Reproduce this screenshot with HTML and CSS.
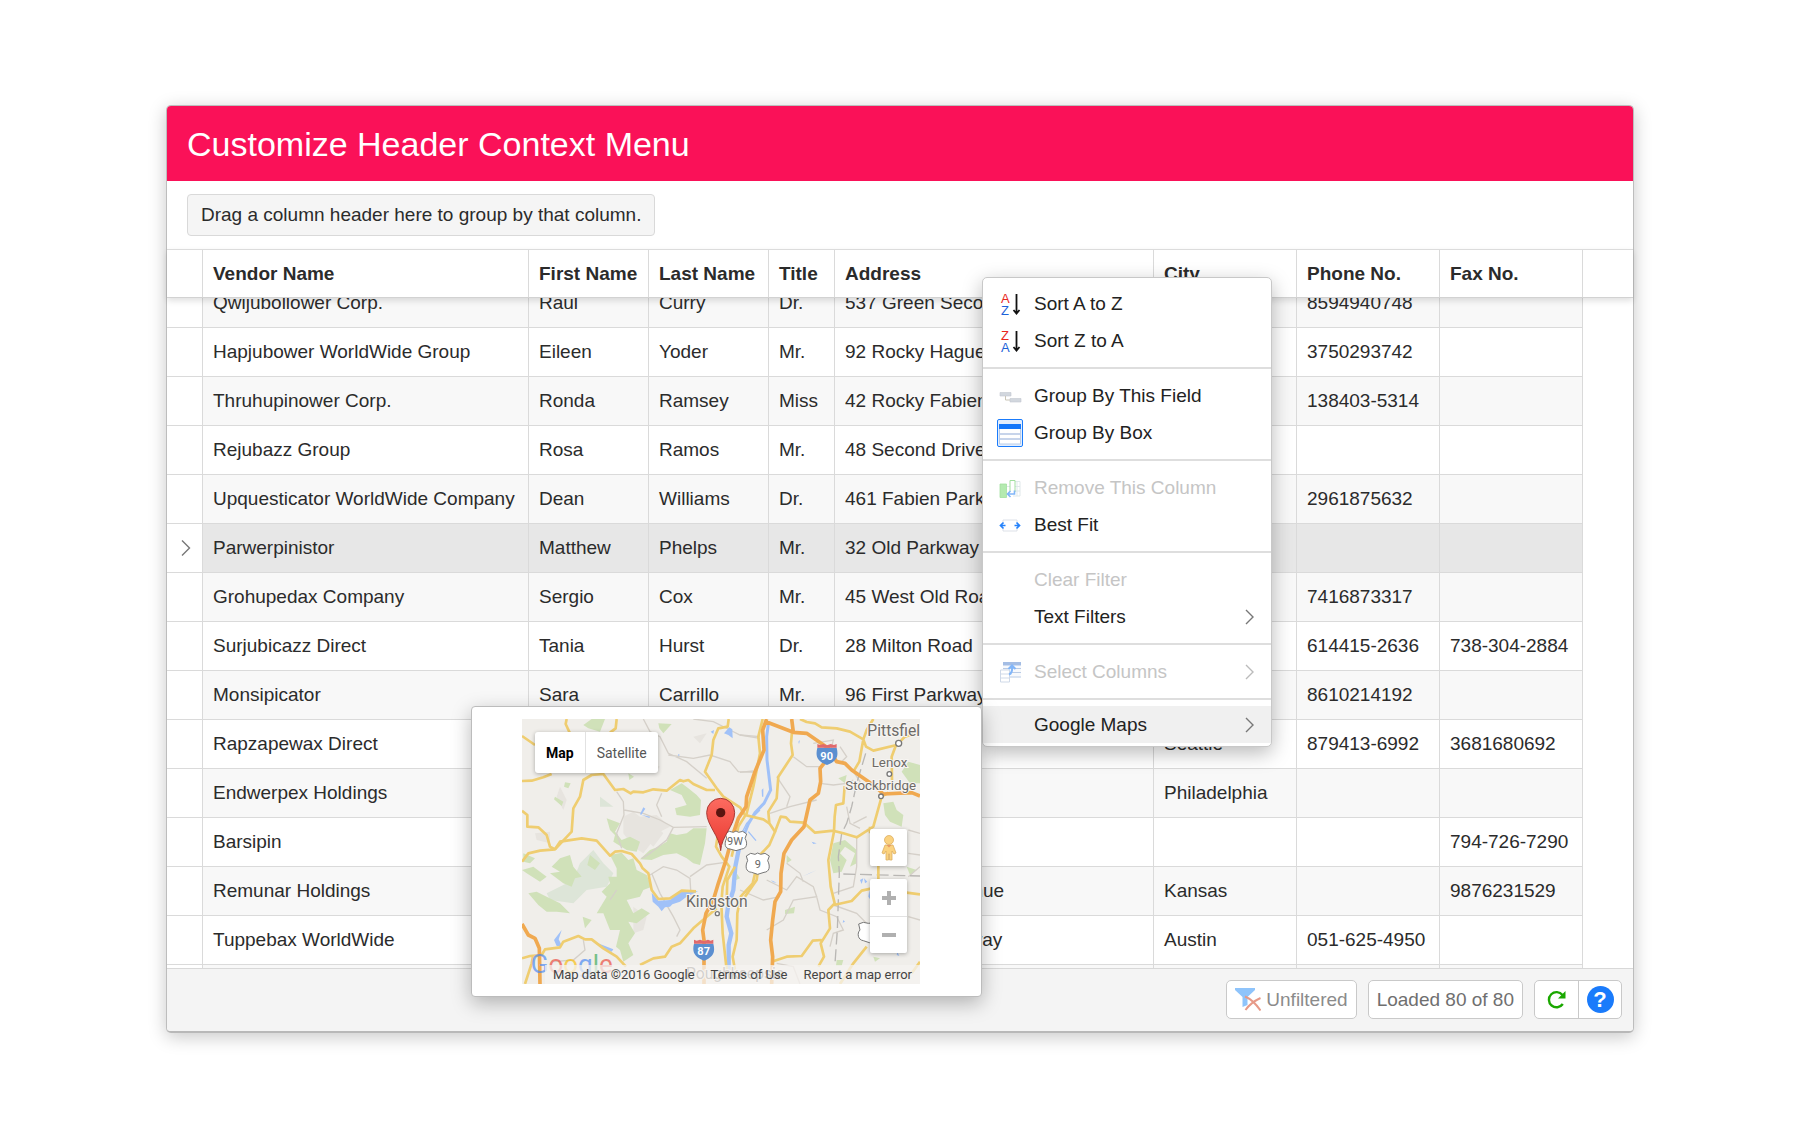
FILE: index.html
```html
<!DOCTYPE html>
<html lang="en">
<head>
<meta charset="utf-8">
<title>Customize Header Context Menu</title>
<link rel="stylesheet" href="styles.css">
</head>
<body>
<main class="window">
  <header class="titlebar"><h1>Customize Header Context Menu</h1></header>
  <div class="group-bar"><div class="group-hint">Drag a column header here to group by that column.</div></div>

  <section class="grid">
    <table class="grid-table grid-head">
      <colgroup><col class="c-mark"><col class="c-vendor"><col class="c-first"><col class="c-last"><col class="c-title"><col class="c-address"><col class="c-wide"><col class="c-wide"><col class="c-wide"><col></colgroup>
      <thead>
        <tr><th></th><th scope="col">Vendor Name</th><th scope="col">First Name</th><th scope="col">Last Name</th><th scope="col">Title</th><th scope="col">Address</th><th scope="col">City</th><th scope="col">Phone No.</th><th scope="col">Fax No.</th><th></th></tr>
      </thead>
    </table>
    <div class="grid-body">
      <table class="grid-table grid-rows" aria-label="Vendors">
        <colgroup><col class="c-mark"><col class="c-vendor"><col class="c-first"><col class="c-last"><col class="c-title"><col class="c-address"><col class="c-wide"><col class="c-wide"><col class="c-wide"><col></colgroup>
        <tbody>
          <tr><td></td><td>Qwijubollower Corp.</td><td>Raul</td><td>Curry</td><td>Dr.</td><td>537 Green Second St.</td><td></td><td>8594940748</td><td></td><td></td></tr>
          <tr><td></td><td>Hapjubower WorldWide Group</td><td>Eileen</td><td>Yoder</td><td>Mr.</td><td>92 Rocky Hague Road</td><td></td><td>3750293742</td><td></td><td></td></tr>
          <tr><td></td><td>Thruhupinower Corp.</td><td>Ronda</td><td>Ramsey</td><td>Miss</td><td>42 Rocky Fabien Road</td><td></td><td>138403-5314</td><td></td><td></td></tr>
          <tr><td></td><td>Rejubazz Group</td><td>Rosa</td><td>Ramos</td><td>Mr.</td><td>48 Second Drive</td><td></td><td></td><td></td><td></td></tr>
          <tr><td></td><td>Upquesticator WorldWide Company</td><td>Dean</td><td>Williams</td><td>Dr.</td><td>461 Fabien Parkway</td><td></td><td>2961875632</td><td></td><td></td></tr>
          <tr class="selected"><td><svg class="chevron" viewBox="0 0 10 16" aria-hidden="true"><path d="M1 0.5 8.5 8 1 15.5"/></svg></td><td>Parwerpinistor</td><td>Matthew</td><td>Phelps</td><td>Mr.</td><td>32 Old Parkway</td><td></td><td></td><td></td><td></td></tr>
          <tr><td></td><td>Grohupedax Company</td><td>Sergio</td><td>Cox</td><td>Mr.</td><td>45 West Old Road</td><td></td><td>7416873317</td><td></td><td></td></tr>
          <tr><td></td><td>Surjubicazz Direct</td><td>Tania</td><td>Hurst</td><td>Dr.</td><td>28 Milton Road</td><td></td><td>614415-2636</td><td>738-304-2884</td><td></td></tr>
          <tr><td></td><td>Monsipicator</td><td>Sara</td><td>Carrillo</td><td>Mr.</td><td>96 First Parkway</td><td></td><td>8610214192</td><td></td><td></td></tr>
          <tr><td></td><td>Rapzapewax Direct</td><td></td><td></td><td></td><td></td><td>Seattle</td><td>879413-6992</td><td>3681680692</td><td></td></tr>
          <tr><td></td><td>Endwerpex Holdings</td><td></td><td></td><td></td><td></td><td>Philadelphia</td><td></td><td></td><td></td></tr>
          <tr><td></td><td>Barsipin</td><td></td><td></td><td></td><td></td><td></td><td></td><td>794-726-7290</td><td></td></tr>
          <tr><td></td><td>Remunar Holdings</td><td></td><td></td><td></td><td>98 Second Avenue</td><td>Kansas</td><td></td><td>9876231529</td><td></td></tr>
          <tr><td></td><td>Tuppebax WorldWide</td><td></td><td></td><td></td><td>71 Rocky Freeway</td><td>Austin</td><td>051-625-4950</td><td></td><td></td></tr>
          <tr><td></td><td></td><td></td><td></td><td></td><td></td><td></td><td></td><td></td><td></td></tr>
        </tbody>
      </table>
    </div>
  </section>

  <footer class="statusbar">
    <button type="button" class="status-btn muted">
      <svg class="i-filter" viewBox="0 0 26 24" aria-hidden="true"><path d="M0 0H20V2L12.5 9V17L7.500 19V9L0 2Z" fill="#8fc4fb"/><path d="M10 8.500C16 11 21 16 25.500 22.500M25.500 10C19 13 14 17 10.500 22" fill="none" stroke="#e79a88" stroke-width="2"/></svg>
      <span>Unfiltered</span>
    </button>
    <button type="button" class="status-btn">Loaded 80 of 80</button>
    <div class="btn-pair">
      <button type="button" aria-label="Refresh"><svg class="i-refresh" viewBox="0 0 20 20" aria-hidden="true"><path d="M15.800 14A7.600 7.600 0 1 1 15.500 5" fill="none" stroke="#1ba800" stroke-width="2.400"/><path d="M18.500 1V8.500H11Z" fill="#1ba800"/></svg></button>
      <button type="button" aria-label="Help"><span class="help">?</span></button>
    </div>
  </footer>

  <nav class="menu" aria-label="Column menu">
    <div class="menu-section">
      <button type="button"><svg class="icon" viewBox="0 0 24 24" aria-hidden="true"><text x="3" y="11" class="az red">A</text><text x="3" y="23" class="az blue">Z</text><path d="M18.500 2V21M15.500 18 18.500 21.500 21.500 18" fill="none" stroke="#111" stroke-width="1.800"/></svg><span>Sort A to Z</span></button>
      <button type="button"><svg class="icon" viewBox="0 0 24 24" aria-hidden="true"><text x="3" y="11" class="az red">Z</text><text x="3" y="23" class="az blue">A</text><path d="M18.500 2V21M15.500 18 18.500 21.500 21.500 18" fill="none" stroke="#111" stroke-width="1.800"/></svg><span>Sort Z to A</span></button>
    </div>
    <div class="menu-section">
      <button type="button"><svg class="icon" viewBox="0 0 24 24" aria-hidden="true"><path d="M2 8.500H13V12H2ZM12 14.500H23V18H12Z" fill="#d2d7de" stroke="#c2c8d0" stroke-width=".6"/><path d="M7.500 12V16H12" fill="none" stroke="#c9c5b8"/></svg><span>Group By This Field</span></button>
      <button type="button" class="checked"><svg class="icon" viewBox="0 0 24 26" aria-hidden="true"><path d="M1.500 4.500H22.500V24H1.500Z" fill="#fff" stroke="#b9cce8"/><path d="M1 4H23V9H1Z" fill="#1477fa"/><path d="M2 14H22M2 19H22" stroke="#8fa9d6"/></svg><span>Group By Box</span></button>
    </div>
    <div class="menu-section">
      <button type="button" disabled><svg class="icon" viewBox="0 0 24 24" aria-hidden="true"><path d="M15 5.500H22V20H15M15 10.500H22M15 15H22M19 5V20M9 10.500H12" fill="none" stroke="#dfe8ea"/><path d="M2 8H8.500V21.500H2Z" fill="#b4eab0" stroke="#a2dfa0" stroke-width=".8"/><path d="M12 15V4.500H17V16" fill="#fff" stroke="#a2dfa0"/><path d="M16.500 14.500V18H9.500M12.500 15 9.500 18 12.500 21" fill="none" stroke="#80b5f8" stroke-width="1.600"/></svg><span>Remove This Column</span></button>
      <button type="button"><svg class="icon" viewBox="0 0 24 24" aria-hidden="true"><path d="M5 9.500V7H19V9.500M5 15.500V18H19V15.500" fill="none" stroke="#dde1e8"/><path d="M7.500 12.500H3M5.500 9.500 2.500 12.500 5.500 15.500M16.500 12.500H21M18.500 9.500 21.500 12.500 18.500 15.500" fill="none" stroke="#2582fb" stroke-width="1.700"/></svg><span>Best Fit</span></button>
    </div>
    <div class="menu-section">
      <button type="button" disabled><span class="icon"></span><span>Clear Filter</span></button>
      <button type="button"><span class="icon"></span><span>Text Filters</span><svg class="chevron" viewBox="0 0 10 16" aria-hidden="true"><path d="M1 1 8 8 1 15"/></svg></button>
    </div>
    <div class="menu-section">
      <button type="button" disabled><svg class="icon" viewBox="0 0 24 24" aria-hidden="true"><path d="M5 3H23V17.500H12V11H5Z" fill="#f7f9fc"/><path d="M5 2H23V5.500H5Z" fill="#a4bde4"/><path d="M5 8.500H23M11 12.500H23M12 17H23" stroke="#b9cbe6"/><path d="M2.500 10H11.500V22H2.500ZM2 14H12M2 18H12" fill="#fff" stroke="#cfd9e8"/><path d="M11 14.500C14 13.500 14.500 11 14 6M10.500 9 14 5.500 17.500 9" fill="none" stroke="#82b6f9" stroke-width="2"/></svg><span>Select Columns</span><svg class="chevron" viewBox="0 0 10 16" aria-hidden="true"><path d="M1 1 8 8 1 15"/></svg></button>
    </div>
    <div class="menu-section">
      <button type="button" class="active"><span class="icon"></span><span>Google Maps</span><svg class="chevron" viewBox="0 0 10 16" aria-hidden="true"><path d="M1 1 8 8 1 15"/></svg></button>
    </div>
  </nav>

  <aside class="map-popup">
    <div class="map">
      <svg class="map-canvas" viewBox="66 57 1194 795" role="img" aria-label="Map around Kingston">
        <defs><linearGradient id="pin" x1="0" y1="0" x2="0" y2="1"><stop offset="0" stop-color="#fd6b60"/><stop offset="1" stop-color="#e93a31"/></linearGradient></defs>
        <path d="M66 57H1260V852H66Z" fill="#f0eeea"/>
        <g fill="#e7e4df">
          <path d="M370 350 400 335 420 350 470 345 510 380 480 395 430 460 400 440 370 400ZM180 260 200 300 190 330 170 290ZM105 400 150 395 150 430 110 420ZM620 100 600 130 580 110ZM440 180 480 200 460 220ZM470 380 490 400 460 440 440 420ZM400 620 440 650 430 690 400 700Z"/>
        </g>
        <g fill="#dde5d8">
          <path d="M140 580 220 540 240 490 280 450 310 490 340 520 320 560 260 570 220 610 150 600ZM300 290 340 320 300 320Z"/>
        </g>
        <g fill="#d0e1b9">
          <path d="M250 75 275 57 315 57 300 95 265 85ZM475 70 515 72 490 100 478 85ZM195 247 212 250 205 265 192 260ZM165 290 190 305 185 318 162 298ZM385 220 402 230 388 240Z"/>
          <path d="M510 270 545 250 565 265 590 285 603 300 600 345 570 350 530 345 525 325 560 315 545 285ZM450 450 475 440 500 425 510 400 530 405 560 400 580 385 620 385 615 430 600 495 580 490 560 475 530 460 490 465 455 480 420 478Z"/>
          <path d="M320 355 360 370 345 395 365 420 390 410 420 425 410 455 380 450 340 425 345 405 330 390ZM330 465 365 458 385 480 400 475 410 510 440 525 455 560 430 570 420 590 380 600 400 640 425 625 450 640 410 670 385 665 405 700 385 730 400 765 370 785 360 750 348 740 360 690 330 690 310 640 290 640 320 590 305 575 330 550 325 530 350 530 350 505ZM180 475 210 465 220 500 245 530 225 535 215 560 190 550 150 520 180 515 155 500ZM70 460 105 475 90 490 70 485ZM66 510 100 500 140 530 120 545 80 520ZM85 580 110 575 140 590 180 610 210 640 170 635 140 635 115 615ZM248 650 275 660 255 685ZM270 465 300 490 285 510 262 495Z"/>
          <path d="M1205 215 1225 185 1260 195V250L1230 250ZM1150 310 1180 305 1190 330 1210 345 1205 380 1170 365 1155 345ZM1015 235 1040 225 1035 250ZM1000 430 1035 420 1070 450 1070 490 1050 500 1065 460 1035 440 1020 460 1040 480 1025 515 1000 520 990 480ZM855 630 885 620 882 640 855 642ZM860 465 875 480 860 490ZM1220 500 1250 510 1230 525ZM1010 780 1030 780 1025 797 1008 797ZM1120 770 1140 775 1125 785ZM710 520 720 535 708 540Z"/>
        </g>
        <g fill="none" stroke="#d5d0c9" stroke-width="4">
          <path d="M430 57 450 95 480 110 505 160 560 185 620 235M505 165 580 175 630 165 690 185 715 215 770 217M580 57 640 65 690 90 720 105 780 115M350 275 370 305 372 345 350 400 365 445M372 330 430 340 480 360 520 382 620 380M485 280 470 315 485 350M520 382 500 420 450 460 425 475M450 525 490 500 530 510 570 535 572 570M570 530 620 495 670 488M455 520 480 580 520 650 540 690 530 710M250 720 255 750 220 780 160 785M330 600 350 570"/>
          <path d="M720 105 780 110M720 217 760 213M830 230 870 290 860 320M810 340 870 320 950 300M880 170 920 200 960 200M1020 140 1040 170 1020 190M990 160 1000 120 940 130M960 250 1000 255 1040 250 1060 240M1060 215 1080 245 1075 270M800 540 860 570 890 530 940 560 950 590 880 600 850 660 800 690M860 490 900 520 910 545M950 590 960 630 1010 650 1030 690 1000 700 990 740M1000 615 1070 640 1110 680M1070 412 1070 500 1060 560 1000 580M1040 320 1050 370 1080 385M1100 350 1060 370M1225 460 1260 465M1225 530 1260 500M1225 390 1260 400M1225 650 1260 660M720 570 790 600 840 590M1140 600 1120 630M900 852 880 800 830 790"/>
        </g>
        <g fill="#a0c1f8">
          <path d="M455 578 475 602 510 600 545 572 594 574 560 590 540 605 517 613 510 620 495 622 485 634 475 620 458 605ZM688 82 697 88 698 115 685 105 672 100ZM632 95 642 90 640 102ZM185 690 176 718 186 738 170 738 162 720ZM275 722 340 748 335 755 300 740ZM430 322 436 326 424 344 450 350 448 354 420 343ZM535 162 540 165 534 168Z"/>
          <path d="M935 425 950 430 940 432ZM812 540 830 548 820 547ZM905 530 950 510 930 520ZM1080 540 1090 535 1085 552ZM1092 535 1102 545 1095 550ZM1108 570 1112 600 1105 590ZM1030 660 1035 665 1028 668ZM1192 755 1198 768 1190 765ZM895 125 900 120 897 132ZM785 270 790 265 790 290 786 290Z"/>
        </g>
        <path d="M806 65 800 110 801 180 812 270 792 310 765 338 745 372 718 440" fill="none" stroke="#a0c1f8" stroke-width="9"/>
        <path d="M718 440 706 500 700 570 684 620 680 650 694 700 686 735 686 810" fill="none" stroke="#a0c1f8" stroke-width="13"/>
        <path d="M715 420 740 370 780 330M745 395 768 422" fill="none" stroke="#a0c1f8" stroke-width="4"/>
        <path d="M1097 160 1085 200 1070 250 1055 320 1040 370 1025 400 1015 470 1018 520 1015 600 1012 690 1005 790M1030 522 1260 528" fill="none" stroke="#b9b7b4" stroke-width="4" stroke-dasharray="36 14"/>
        <g fill="none" stroke="#efcd70" stroke-width="8" stroke-linejoin="round">
          <path d="M66 108 105 135M200 57 197 72 210 100M350 57 347 85 330 98M686 57 683 80 655 85 640 120 635 165 615 215 650 265 670 290 720 322 735 345 790 358 808 370"/>
          <path d="M66 243 95 242 130 232 155 222M66 332 82 345 82 380 115 382 140 405 150 440 165 448M66 485 85 460 120 452 165 448 215 395 220 325 240 290 250 240 275 225 310 222 345 270 370 267 392 280 400 275 430 277 460 268 500 272 540 240 550 244 565 240 580 252 620 270 645 270"/>
          <path d="M165 448 180 425 245 415 290 422 330 467 345 455 365 453 395 462 420 490 428 505 445 520 455 570 475 597 510 595 545 572 588 574M66 775 90 768 125 765 135 748 180 742 190 725 235 708 255 718 275 718 310 745 350 770 378 800M75 852 95 790 100 765M420 795 460 775 495 770 515 740 540 730 580 685 650 625"/>
          <path d="M655 395 648 440 665 470 688 500 668 560 664 610 668 700 680 810M705 500 682 540 680 600M770 500 758 550 722 590 712 640 710 720 698 770 705 810M788 57 775 110 780 160 760 260 740 340 715 380 695 470"/>
          <path d="M900 57 920 66 945 70 965 82 1010 85 1050 95 1090 118 1098 140 1120 152 1190 135 1215 110 1260 95M1120 57 1100 90 1090 118 1078 185 1060 215M876 95 873 130 878 165 835 230 830 295 805 335 808 370 825 395 808 435 780 465 770 540 735 590"/>
          <path d="M825 395 842 350 858 352 870 365 912 368 945 398 1000 392 1030 400 1070 412 1120 380 1145 290 1165 278M1034 258 1030 310 1008 315 1004 350 1002 395 985 480 992 560 1004 610 985 630 990 685 962 730 972 770 955 800M1002 615 1055 603 1085 572 1140 560M815 785 860 770 905 768 938 722 965 720M1135 490V560M1100 740 1060 790 1020 852M1190 130 1175 170 1176 240M1220 578 1260 583M1260 785 1235 820M1110 380V400"/>
        </g>
        <g fill="none" stroke="#f0a950" stroke-width="11" stroke-linejoin="round">
          <path d="M800 57 788 90 792 150 765 215 740 290 738 320 715 355 700 400 678 480 655 550 640 600 618 640 608 690 612 720V852M800 66 880 97 920 100 985 145 1010 185 1035 190 1055 210 1120 255 1150 282 1235 278 1260 288M875 57 880 97M980 180 960 205 962 245 955 280 930 300 912 380 875 420 852 460 843 520 842 575 825 605 818 660 812 720 818 770 815 852M66 672 85 705 105 715 118 745 120 852"/>
        </g>
        <g class="shield">
          <path d="M676 400 688 394 700 397 708 393 716 397 728 394 740 402 735 415C744 430 740 446 725 447L708 452 690 447C674 446 672 430 680 415Z"/>
          <path d="M739 468 752 460 765 463 773 459 782 463 795 460 808 468 803 482C812 500 808 516 792 517L773 523 755 517C738 516 734 500 743 482Z"/>
          <path d="M1076 672 1090 667 1105 670 1130 668V728H1108L1090 722C1074 720 1070 700 1080 690Z"/>
        </g>
        <g fill="#5b8fd0">
          <path d="M582 731H640C646 755 642 770 612 782 582 770 576 755 582 731ZM952 143H1010C1016 168 1012 184 981 195 950 184 946 168 952 143Z"/>
        </g>
        <path d="M582 719 590 722 600 719 612 723 624 719 632 722 640 719V731H582ZM952 132 960 135 970 132 981 136 992 132 1002 135 1010 132V143H952Z" fill="#e0696c"/>
        <g class="town-dot"><circle cx="652" cy="641" r="6"/><circle cx="1196" cy="130" r="9"/><circle cx="1168" cy="222" r="7"/><circle cx="1143" cy="289" r="7"/></g>
        <g class="town">
          <text x="558" y="621" class="city">Kingston</text>
          <text x="1102" y="108" class="city">Pittsfield</text>
          <text x="1115" y="202">Lenox</text>
          <text x="1036" y="270">Stockbridge</text>
          <text x="558" y="838" class="city">Poughkeepsie</text>
        </g>
        <g class="route"><text x="681" y="435">9W</text><text x="764" y="503">9</text></g>
        <g class="interstate"><text x="592" y="766">87</text><text x="961" y="179">90</text></g>
        <path d="M662 452C660 410 620 375 620 338A42 43 0 0 1 704 338C704 375 664 410 662 452Z" fill="url(#pin)" stroke="#a83a34" stroke-width="3"/>
        <circle cx="662" cy="338" r="14" fill="#5a1510"/>
        <text x="92" y="818" class="logo"><tspan fill="#4285f4">G</tspan><tspan fill="#ea4335">o</tspan><tspan fill="#fbbc05">o</tspan><tspan fill="#4285f4">g</tspan><tspan fill="#34a853">l</tspan><tspan fill="#ea4335">e</tspan></text>
      </svg>
      <div class="map-type"><button type="button" class="on">Map</button><button type="button">Satellite</button></div>
      <div class="map-tools">
        <button type="button" class="pegman" aria-label="Street View"><svg viewBox="0 0 16 26" aria-hidden="true"><g fill="#fbd27f" stroke="#dcae62" stroke-width=".8"><path d="M4 10H12L15 18 13 19 11 16V25H8.500V19H7.500V25H5V16L3 19 1 18Z"/><circle cx="8" cy="5" r="4.500"/></g><path d="M5.500 10H10.500L8 12.500Z" fill="#e99b62"/></svg></button>
        <div class="zoom"><button type="button" aria-label="Zoom in"><svg viewBox="0 0 14 14" aria-hidden="true"><path d="M0 7H14M7 0V14"/></svg></button><button type="button" aria-label="Zoom out"><svg viewBox="0 0 14 14" aria-hidden="true"><path d="M0 7H14"/></svg></button></div>
      </div>
      <div class="map-legal"><span>Map data ©2016 Google</span><a href="#terms">Terms of Use</a><a href="#report">Report a map error</a></div>
    </div>
  </aside>
</main>
</body>
</html>
```
FILE: styles.css
```css
* { box-sizing: border-box; }

body {
  margin: 0;
  padding: 105px 166px;
  background: #fff;
  color: #2b2b2b;
  font: 19px/24px "Liberation Sans", Arial, sans-serif;
}

button { margin: 0; padding: 0; border: 0; background: none; color: inherit; font: inherit; }

.window {
  position: relative;
  border: 1px solid #bdbdbd;
  border-bottom: 2px solid #b8b8b8;
  border-radius: 5px;
  background: #fff;
  box-shadow: 0 4px 18px rgba(0, 0, 0, .22);
}

.titlebar {
  padding: 18px 20px 17px;
  border-radius: 4px 4px 0 0;
  background: #fa1158;
  color: #fff;
}
.titlebar h1 { margin: 0; font-size: 34px; line-height: 40px; font-weight: 400; }

.group-bar { display: flex; padding: 13px 20px; }
.group-hint {
  padding: 8px 13px;
  border: 1px solid #d9d9d9;
  border-radius: 4px;
  background: #f5f5f5;
}

.grid-table { width: 100%; table-layout: fixed; border-collapse: separate; border-spacing: 0; }
.c-mark { width: 36px; }
.c-vendor { width: 326px; }
.c-first, .c-last { width: 120px; }
.c-title { width: 66px; }
.c-address { width: 319px; }
.c-wide { width: 143px; }

.grid-head {
  position: relative;
  border-top: 1px solid #dcdcdc;
  border-bottom: 1px solid #d2d2d2;
  background: #fff;
  box-shadow: 0 3px 6px rgba(0, 0, 0, .12);
}
.grid-table th, .grid-table td {
  height: 49px;
  padding: 0 0 0 10px;
  border-right: 1px solid #dadada;
  text-align: left;
  white-space: nowrap;
  overflow: hidden;
}
.grid-table th { height: 47px; font-weight: 700; }
.grid-table td { border-bottom: 1px solid #dadada; }
.grid-table th:last-child, .grid-table td:last-child { border: 0; }

.grid-body { height: 670px; overflow: hidden; }
.grid-rows { margin-top: -19px; }
.grid-rows tr:nth-child(odd) td { background: #f8f8f8; }
.grid-rows tr.selected td { background: #e7e7e7; }
.grid-rows tr td:first-child, .grid-rows tr td:last-child,
.grid-rows tr.selected td:first-child, .grid-rows tr.selected td:last-child { background: #fff; }
.grid-rows td:first-child { padding-left: 14px; }

.chevron { display: block; width: 10px; height: 16px; fill: none; stroke: #777; stroke-width: 1.4; }

.statusbar {
  display: flex;
  justify-content: flex-end;
  gap: 11px;
  padding: 11px 11px 12px;
  border-top: 1px solid #d8d8d8;
  border-radius: 0 0 4px 4px;
  background: #f4f4f4;
}
.status-btn, .btn-pair {
  display: flex;
  align-items: center;
  height: 39px;
  border: 1px solid #c9c9c9;
  border-radius: 5px;
  background: #fff;
  color: #6f6f6f;
}
.status-btn { padding: 0 8px; gap: 5px; }
.muted { color: #8b8b8b; }
.i-filter { width: 26px; height: 24px; }
.btn-pair button { display: flex; align-items: center; justify-content: center; width: 43px; height: 37px; }
.btn-pair button + button { border-left: 1px solid #c9c9c9; }
.i-refresh { width: 20px; height: 20px; }
.help {
  width: 27px;
  height: 27px;
  border-radius: 50%;
  background: #1a7bfb;
  color: #fff;
  font-size: 22px;
  line-height: 27px;
  font-weight: 700;
}

.menu {
  position: absolute;
  top: 171px;
  left: 815px;
  width: 290px;
  border: 1px solid #c8c8c8;
  border-radius: 5px;
  background: #fff;
  box-shadow: 0 6px 20px rgba(0, 0, 0, .28);
}
.menu-section { padding: 8px 0; }
.menu-section + .menu-section { border-top: 2px solid #dedede; }
.menu-section:first-child { padding-top: 7px; }
.menu-section:last-child { padding: 6px 0 3px; }
.menu button {
  display: flex;
  align-items: center;
  gap: 12px;
  width: 100%;
  height: 37px;
  padding: 0 16px 0 15px;
  color: #222;
  text-align: left;
}
.menu .icon { flex: none; width: 24px; height: 24px; }
.menu .chevron { margin-left: auto; }
.menu button:disabled { color: #c5c5c5; }
.menu button:disabled .chevron { stroke: #bbb; }
.menu .active { background: #f0f0f0; }
.menu .checked .icon { height: 26px; border-radius: 1px; background: #e3eefd; outline: 1px solid #1a7bfb; }
.az { font: 13px "Liberation Sans", Arial, sans-serif; }
.red { fill: #e8261c; }
.blue { fill: #1c62d8; }

.map-popup {
  position: absolute;
  top: 600px;
  left: 304px;
  padding: 12px 61px 12px 50px;
  border: 1px solid #bcbcbc;
  border-radius: 4px;
  background: #fff;
  box-shadow: 0 6px 20px rgba(0, 0, 0, .28);
  font-family: Roboto, sans-serif;
}
.map { position: relative; width: 398px; height: 265px; }
.map-canvas { display: block; width: 100%; height: 100%; }
.shield { fill: #fff; stroke: #777; stroke-width: 3; }
.town-dot { fill: #fff; stroke: #777; stroke-width: 4; }
.town { fill: #6d6a66; stroke: #f7f5f2; stroke-width: 6px; paint-order: stroke; font: 40px Roboto, sans-serif; }
.town .city { font-size: 47px; }
.route { fill: #666; font: 33px Roboto, sans-serif; }
.interstate { fill: #fff; font: 700 33px Roboto, sans-serif; }
.logo { font: 78px Roboto, sans-serif; opacity: .65; }

.map-type {
  position: absolute;
  top: 13px;
  left: 13px;
  display: flex;
  border-radius: 3px;
  background: #fff;
  box-shadow: 0 1px 4px rgba(0, 0, 0, .3);
}
.map-type button { height: 41px; padding: 0 11px; color: #565656; font-size: 14px; }
.map-type button + button { border-left: 1px solid #e2e2e2; }
.map-type .on { color: #000; font-weight: 700; }

.map-tools { position: absolute; top: 110px; right: 13px; display: grid; gap: 13px; width: 37px; }
.map-tools button { display: flex; align-items: center; justify-content: center; width: 100%; height: 37px; }
.pegman, .zoom { border-radius: 2px; background: #fff; box-shadow: 0 1px 4px rgba(0, 0, 0, .3); }
.pegman svg { width: 16px; height: 26px; }
.zoom svg { width: 14px; height: 14px; stroke: #b0b0b0; stroke-width: 4; }
.zoom button + button { border-top: 1px solid #e2e2e2; }

.map-legal {
  position: absolute;
  right: 0;
  bottom: 0;
  display: flex;
  gap: 16px;
  padding: 0 8px;
  background: rgba(245, 243, 240, .75);
  color: #444;
  font-size: 13px;
  line-height: 19px;
  white-space: nowrap;
}
.map-legal a { color: inherit; text-decoration: none; }
```
